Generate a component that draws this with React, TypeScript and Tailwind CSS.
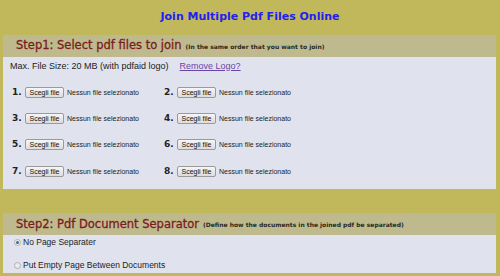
const heading = "font-['DejaVu_Sans',sans-serif]";
const body = "font-['Liberation_Sans',Arial,sans-serif]";

function FilePick({ n }: { n: number }) {
  return (
    <div className="flex h-[26.33px] items-center">
      <span className={`${heading} w-[13px] text-[9px] font-bold leading-none text-[#222]`}>{n}.</span>
      <span
        className={`${body} flex h-[11px] w-[39px] items-center justify-center rounded-[2px] border border-[#9a9a9a] bg-gradient-to-b from-[#f6f6f6] to-[#dcdcdc] text-[7px] leading-none text-[#111]`}
      >
        Scegli file
      </span>
      <span className={`${body} ml-[3px] text-[7px] leading-none text-[#222]`}>Nessun file selezionato</span>
    </div>
  );
}

function StepHeader({ title, note }: { title: string; note: string }) {
  return (
    <div className="flex h-[22px] items-center bg-[#bfba8e] pl-[13px]">
      <span className={`${heading} text-[11.5px] leading-none text-[#7b1c1c] [-webkit-text-stroke:0.3px_#7b1c1c]`}>
        {title}
      </span>
      <span className={`${heading} ml-[4px] mt-[2px] text-[6px] font-bold leading-none text-[#2a2a1a]`}>{note}</span>
    </div>
  );
}

function Radio({ checked, label }: { checked?: boolean; label: string }) {
  return (
    <div className="flex h-[14px] items-center pl-[11px]">
      <span className="flex h-[7px] w-[7px] items-center justify-center rounded-full border border-[#b0b0b0] bg-[#ececec]">
        {checked && <span className="h-[3px] w-[3px] rounded-full bg-[#3a6f88]" />}
      </span>
      <span className={`${body} ml-[2px] text-[8.5px] leading-none text-[#222]`}>{label}</span>
    </div>
  );
}

export default function App() {
  return (
    <div className="h-[276px] w-[500px] overflow-hidden bg-[#c1b85b]">
      <h1 className={`${heading} pt-[10px] text-center text-[11px] font-bold leading-[14px] text-[#2121f0]`}>
        Join Multiple Pdf Files Online
      </h1>

      <section className="ml-[3px] mr-[4px] mt-[11px] bg-[#e0e3ee]">
        <StepHeader title="Step1: Select pdf files to join" note="(In the same order that you want to join)" />
        <div className="pl-[7px] pt-[3px] pb-[5px]">
          <div className={`${body} flex h-[12px] items-center text-[9px] leading-none text-[#222]`}>
            <span>Max. File Size: 20 MB (with pdfaid logo)</span>
            <a className="ml-[11px] text-[#6a45a6] underline">Remove Logo?</a>
          </div>
          <div className="mt-[7px] grid grid-cols-[152px_152px] pl-[2px]">
            {[1, 2, 3, 4, 5, 6, 7, 8].map((n) => (
              <FilePick key={n} n={n} />
            ))}
          </div>
        </div>
      </section>

      <section className="ml-[3px] mr-[4px] mt-[24px] bg-[#e0e3ee] pb-[1px]">
        <StepHeader
          title="Step2: Pdf Document Separator"
          note="(Define how the documents in the joined pdf be separated)"
        />
        <Radio checked label="No Page Separater" />
        <div className="h-[9px]" />
        <Radio label="Put Empty Page Between Documents" />
      </section>
    </div>
  );
}
